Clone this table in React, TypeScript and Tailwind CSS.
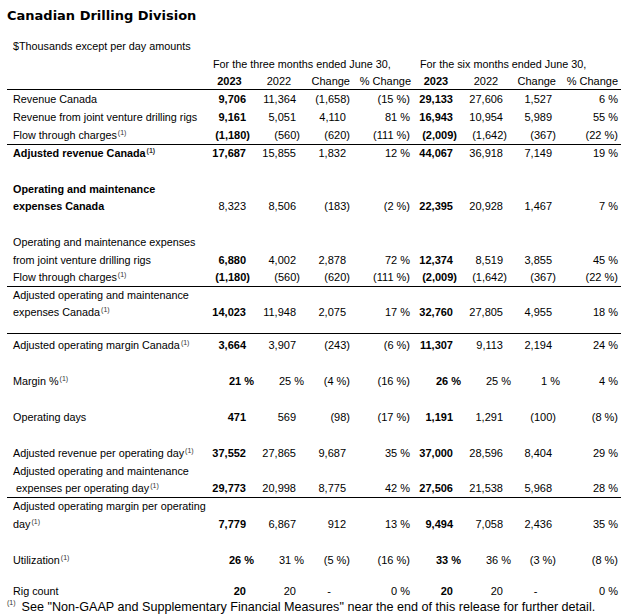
import React from "react";

// Colunas: rótulo + 3 meses (2023, 2022, Change, % Change) + 6 meses (idem)
const GRID = "grid grid-cols-[198px_49px_50px_50px_57px_50px_50px_49px_61px]";

type Row = {
  label?: React.ReactNode;
  vals?: string[];
  h: string;
  bold?: boolean;
  line?: boolean;
  plainFirst?: boolean;
};

const Sup = () => <sup className="text-[7px] text-[#333] ml-[1px] -top-1">(1)</sup>;

const ROWS: Row[] = [
  { label: "Revenue Canada", vals: ["9,706", "11,364", "(1,658)", "(15 %)", "29,133", "27,606", "1,527", "6 %"], h: "h-[18px]" },
  { label: "Revenue from joint venture drilling rigs", vals: ["9,161", "5,051", "4,110", "81 %", "16,943", "10,954", "5,989", "55 %"], h: "h-[18px]" },
  { label: <>Flow through charges<Sup /></>, vals: ["(1,180)", "(560)", "(620)", "(111 %)", "(2,009)", "(1,642)", "(367)", "(22 %)"], h: "h-[19px]", line: true },
  { label: <>Adjusted revenue Canada<Sup /></>, vals: ["17,687", "15,855", "1,832", "12 %", "44,067", "36,918", "7,149", "19 %"], h: "h-[17px]", bold: true },
  { h: "h-[18px]" },
  { label: "Operating and maintenance", h: "h-[18px]", bold: true },
  { label: "expenses Canada", vals: ["8,323", "8,506", "(183)", "(2 %)", "22,395", "20,928", "1,467", "7 %"], h: "h-[17px]", bold: true, plainFirst: true },
  { h: "h-[18px]" },
  { label: "Operating and maintenance expenses", h: "h-[18px]" },
  { label: "from joint venture drilling rigs", vals: ["6,880", "4,002", "2,878", "72 %", "12,374", "8,519", "3,855", "45 %"], h: "h-[18px]" },
  { label: <>Flow through charges<Sup /></>, vals: ["(1,180)", "(560)", "(620)", "(111 %)", "(2,009)", "(1,642)", "(367)", "(22 %)"], h: "h-[18px]", line: true },
  { label: "Adjusted operating and maintenance", h: "h-[17px]" },
  { label: <>expenses Canada<Sup /></>, vals: ["14,023", "11,948", "2,075", "17 %", "32,760", "27,805", "4,955", "18 %"], h: "h-[17px]" },
  { h: "h-[13px]", line: true },
  { label: <>Adjusted operating margin Canada<Sup /></>, vals: ["3,664", "3,907", "(243)", "(6 %)", "11,307", "9,113", "2,194", "24 %"], h: "h-[22px]" },
  { h: "h-[16px]" },
  { label: <>Margin %<Sup /></>, vals: ["21 %", "25 %", "(4 %)", "(16 %)", "26 %", "25 %", "1 %", "4 %"], h: "h-[18px]" },
  { h: "h-[18px]" },
  { label: "Operating days", vals: ["471", "569", "(98)", "(17 %)", "1,191", "1,291", "(100)", "(8 %)"], h: "h-[18px]" },
  { h: "h-[18px]" },
  { label: <>Adjusted revenue per operating day<Sup /></>, vals: ["37,552", "27,865", "9,687", "35 %", "37,000", "28,596", "8,404", "29 %"], h: "h-[18px]" },
  { label: "Adjusted operating and maintenance", h: "h-[18px]" },
  { label: <>&nbsp;expenses per operating day<Sup /></>, vals: ["29,773", "20,998", "8,775", "42 %", "27,506", "21,538", "5,968", "28 %"], h: "h-[18px]", line: true },
  { label: "Adjusted operating margin per operating", h: "h-[17px]" },
  { label: <>day<Sup /></>, vals: ["7,779", "6,867", "912", "13 %", "9,494", "7,058", "2,436", "35 %"], h: "h-[18px]" },
  { h: "h-[18px]" },
  { label: <>Utilization<Sup /></>, vals: ["26 %", "31 %", "(5 %)", "(16 %)", "33 %", "36 %", "(3 %)", "(8 %)"], h: "h-[18px]" },
  { h: "h-[13px]" },
  { label: "Rig count", vals: ["20", "20", "-", "0 %", "20", "20", "-", "0 %"], h: "h-[18px]" },
];

// alinhamento à direita com "folga" para o parêntese, como no Excel
function valueClass(v: string, col: number) {
  if (v === "-") return "text-center";
  if (col === 3) return "text-right pr-[1px]";
  if (col === 7) return "text-right pr-[3px]";
  if (v.endsWith("%")) return "text-right pr-0";
  if (v.startsWith("(")) return "text-right pr-[4px]";
  return "text-right pr-[8px]";
}

export default function App() {
  return (
    <div className="w-[638px] h-[616px] bg-white text-black font-['Liberation_Sans',Arial,sans-serif] text-[11px] leading-[13px]">
      <div className="h-[30px] flex items-center pl-[7px] font-['DejaVu_Sans',Verdana,sans-serif] font-bold text-[13px]">
        Canadian Drilling Division
      </div>

      <div className="ml-[7px] mt-[7px] w-[614px]">
        <div className={`${GRID} h-[18px] items-center`}>
          <div className="pl-[6px] col-span-9 text-[10.8px]">$Thousands except per day amounts</div>
        </div>
        <div className={`${GRID} h-[18px] items-center`}>
          <div />
          <div className="col-span-4 pl-[8px] text-[10.8px]">For the three months ended June 30,</div>
          <div className="col-span-4 pl-[9px] text-[10.8px]">For the six months ended June 30,</div>
        </div>
        <div className={`${GRID} h-[17px] items-center border-b border-black`}>
          <div />
          <div className="text-center font-bold">2023</div>
          <div className="text-center">2022</div>
          <div className="text-right pr-[4px]">Change</div>
          <div className="text-right">% Change</div>
          <div className="text-center font-bold">2023</div>
          <div className="text-center">2022</div>
          <div className="text-right pr-[4px]">Change</div>
          <div className="text-right pr-[3px]">% Change</div>
        </div>

        {ROWS.map((row, i) => (
          <div key={i} className={`${GRID} ${row.h} items-center ${row.line ? "border-b border-black" : ""}`}>
            <div className={`pl-[6px] whitespace-nowrap text-[10.8px] ${row.bold ? "font-bold" : ""}`}>{row.label}</div>
            {row.vals?.map((v, c) => (
              <div
                key={c}
                className={`${valueClass(v, c)} ${(c === 0 && !row.plainFirst) || c === 4 ? "font-bold" : ""}`}
              >
                {v}
              </div>
            ))}
          </div>
        ))}

        <div className="h-[14px] flex items-center whitespace-nowrap text-[12.6px]">
          <sup className="text-[7px] text-[#333] -top-1">(1)</sup>
          <span className="ml-[6px]">See "Non-GAAP and Supplementary Financial Measures" near the end of this release for further detail.</span>
        </div>
      </div>
    </div>
  );
}
